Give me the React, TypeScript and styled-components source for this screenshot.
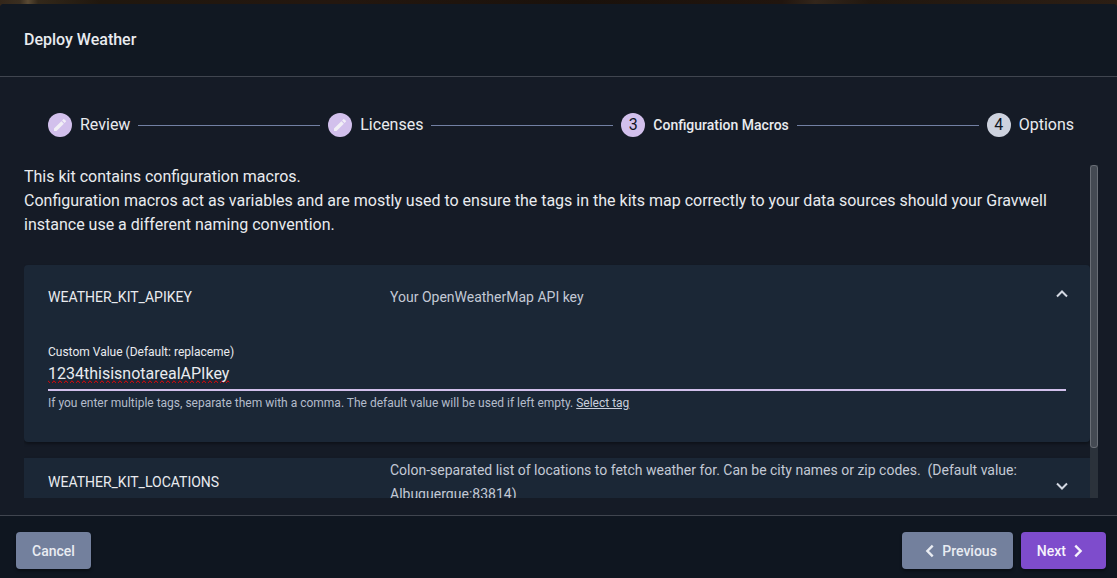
import React, { useState } from "react";
import styled, { createGlobalStyle } from "styled-components";

const GlobalStyle = createGlobalStyle`
  *, *::before, *::after { box-sizing: border-box; }
  body {
    margin: 0;
    background: #1c130d;
    font-family: Roboto, "Liberation Sans", sans-serif;
    font-size: 16px;
    line-height: 24px;
    color: #e9ebef;
  }
  button, input { font: inherit; color: inherit; }
`;

const Backdrop = styled.div`
  height: 100vh;
  padding-top: 4px;
  background: linear-gradient(90deg, #33261a 0, #3a2e20 20px, #5a4a34 28px, #33281a 38px, #20170e 100px, #24170f 30%, #1a110b 52%, #21150e 70%, #33261b 73%, #21170f 78%, #2c1e14 100%);
`;

const Dialog = styled.div`
  display: flex;
  flex-direction: column;
  height: 100%;
  overflow: hidden;
  border-radius: 4px 4px 0 0;
  background: #151b26;
`;

const DialogHeader = styled.header`
  flex: none;
  padding: 24px;
  background: #111822;
  border-bottom: 1px solid #40454f;
`;

const Title = styled.h2`
  margin: 0;
  font-size: 16px;
  font-weight: 500;
  line-height: 24px;
`;

const Body = styled.main`
  flex: 1;
  min-height: 0;
  display: flex;
  flex-direction: column;
  padding: 0 19px 17px 24px;
`;

const Stepper = styled.ol`
  flex: none;
  display: flex;
  align-items: center;
  gap: 8px;
  margin: 0;
  padding: 36px 24px 28px;
  list-style: none;
`;

const Step = styled.li`
  display: flex;
  flex: 1 1 auto;
  align-items: center;
  gap: 8px;
  white-space: nowrap;

  &:not(:last-child)::after {
    content: "";
    flex: 1;
    height: 1px;
    background: #7280a3;
  }
  &:last-child { flex: none; }
`;

const StepBadge = styled.span<{ $pending?: boolean }>`
  display: flex;
  flex: none;
  align-items: center;
  justify-content: center;
  width: 24px;
  height: 24px;
  border-radius: 50%;
  background: ${(p) => (p.$pending ? "#cdd2de" : "#d2c0ec")};
  color: #10151e;
`;

const StepLabel = styled.span<{ $current?: boolean }>`
  font-size: ${(p) => (p.$current ? 14 : 16)}px;
  font-weight: ${(p) => (p.$current ? 500 : 400)};
`;

const ScrollRow = styled.div`
  flex: 1;
  min-height: 0;
  display: flex;
`;

const ScrollArea = styled.div`
  flex: 1;
  min-width: 0;
  overflow-y: auto;
  scrollbar-width: none;
`;

const ScrollTrack = styled.div`
  flex: none;
  width: 8px;
  background: #2b323b;
`;

const ScrollThumb = styled.div`
  height: 85%;
  border: 1px solid #696e76;
  border-radius: 3px;
  background: #444a53;
`;

const Intro = styled.p`
  margin: 0 0 28px;
`;

const Panel = styled.section<{ $open: boolean }>`
  margin-bottom: 16px;
  border-radius: ${(p) => (p.$open ? 4 : 0)}px;
  background: #1b2736;
  box-shadow: 0 2px 3px rgba(0, 0, 0, 0.35);
`;

const PanelHeader = styled.button<{ $open: boolean }>`
  display: grid;
  grid-template-columns: 1fr 2fr 8px;
  column-gap: 16px;
  align-items: center;
  width: 100%;
  min-height: ${(p) => (p.$open ? 64 : 48)}px;
  padding: 0 24px;
  border: 0;
  background: none;
  text-align: left;
  font-size: 14px;
  line-height: 24px;
  cursor: pointer;
`;

const PanelDescription = styled.span`
  color: #c3c9d5;
  white-space: pre-wrap;
`;

const Indicator = styled.svg<{ $open: boolean }>`
  overflow: visible;
  margin: ${(p) => (p.$open ? "0 0 6px" : "8px 0 0")};
  transform: ${(p) => (p.$open ? "rotate(180deg)" : "none")};
`;

const PanelBody = styled.div`
  padding: 15px 24px 31px;
  font-size: 12px;
  line-height: 16px;
`;

const FieldLabel = styled.label`
  display: block;
`;

const TextInput = styled.input`
  display: block;
  width: 100%;
  height: 31px;
  padding: 0 0 3px;
  border: 0;
  border-bottom: 2px solid #d2c0ec;
  outline: 0;
  background: none;
  font-size: 16px;
  line-height: 24px;
  text-decoration-line: spelling-error;
`;

const Hint = styled.p`
  margin: 4px 0 0;
  color: #b4bccb;
`;

const TagLink = styled.a`
  color: #c8cedb;
`;

const Footer = styled.footer`
  flex: none;
  display: flex;
  align-items: center;
  gap: 8px;
  padding: 16px 11px 9px 16px;
  background: #0f1620;
  border-top: 1px solid #40454f;
`;

const Spacer = styled.div`
  flex: 1;
`;

const Button = styled.button<{ $primary?: boolean }>`
  display: inline-flex;
  align-items: center;
  height: 37px;
  padding: 0 16px;
  border: 0;
  border-radius: 4px;
  background: ${(p) => (p.$primary ? "#7e4ccc" : "#73809d")};
  color: ${(p) => (p.$primary ? "#f6f2fc" : "#e9ecf2")};
  font-size: 14px;
  font-weight: 500;
  box-shadow: 0 2px 3px rgba(0, 0, 0, 0.4);
  cursor: pointer;
`;

const PencilIcon = () => (
  <svg width="16" height="16" viewBox="0 0 24 24" fill="#f1eff6" aria-hidden="true">
    <path d="M3 17.25V21h3.75L17.81 9.94l-3.75-3.75L3 17.25zM20.71 7.04a.996.996 0 0 0 0-1.41l-2.34-2.34a.996.996 0 0 0-1.41 0l-1.83 1.83 3.75 3.75 1.83-1.83z" />
  </svg>
);

const ArrowIcon = ({ d }: { d: string }) => (
  <svg width="24" height="24" viewBox="0 0 24 24" fill="none" stroke="currentColor" strokeWidth="2.4" aria-hidden="true">
    <path d={d} />
  </svg>
);

type Macro = { name: string; description: string; initialOpen: boolean; fallback: string; value: string };

const macros: Macro[] = [
  {
    name: "WEATHER_KIT_APIKEY",
    description: "Your OpenWeatherMap API key",
    initialOpen: true,
    fallback: "replaceme",
    value: "1234thisisnotarealAPIkey",
  },
  {
    name: "WEATHER_KIT_LOCATIONS",
    description:
      "Colon-separated list of locations to fetch weather for. Can be city names or zip codes.  (Default value: Albuquerque:83814)",
    initialOpen: false,
    fallback: "Albuquerque:83814",
    value: "",
  },
];

const MacroPanel = ({ macro }: { macro: Macro }) => {
  const [open, setOpen] = useState(macro.initialOpen);
  const [value, setValue] = useState(macro.value);
  return (
    <Panel $open={open}>
      <PanelHeader type="button" $open={open} aria-expanded={open} onClick={() => setOpen(!open)}>
        <span>{macro.name}</span>
        <PanelDescription>{macro.description}</PanelDescription>
        <Indicator $open={open} width="8" height="8" viewBox="0 0 8 8" fill="none" stroke="#d3d8e2" strokeWidth="2" aria-hidden="true">
          <path d="M-1 1.5L4 6.5L9 1.5" />
        </Indicator>
      </PanelHeader>
      {open && (
        <PanelBody>
          <FieldLabel htmlFor={macro.name}>Custom Value (Default: {macro.fallback})</FieldLabel>
          <TextInput id={macro.name} type="text" value={value} onChange={(e) => setValue(e.target.value)} />
          <Hint>
            If you enter multiple tags, separate them with a comma. The default value will be used if left empty.{" "}
            <TagLink href="#tags">Select tag</TagLink>
          </Hint>
        </PanelBody>
      )}
    </Panel>
  );
};

export default function App() {
  return (
    <>
      <GlobalStyle />
      <Backdrop>
        <Dialog role="dialog" aria-labelledby="dialog-title">
          <DialogHeader>
            <Title id="dialog-title">Deploy Weather</Title>
          </DialogHeader>
          <Body>
            <Stepper>
              <Step>
                <StepBadge><PencilIcon /></StepBadge>
                <StepLabel>Review</StepLabel>
              </Step>
              <Step>
                <StepBadge><PencilIcon /></StepBadge>
                <StepLabel>Licenses</StepLabel>
              </Step>
              <Step aria-current="step">
                <StepBadge>3</StepBadge>
                <StepLabel $current>Configuration Macros</StepLabel>
              </Step>
              <Step>
                <StepBadge $pending>4</StepBadge>
                <StepLabel>Options</StepLabel>
              </Step>
            </Stepper>
            <ScrollRow>
              <ScrollArea>
                <Intro>
                  This kit contains configuration macros.
                  <br />
                  Configuration macros act as variables and are mostly used to ensure the tags in the kits map correctly
                  to your data sources should your Gravwell instance use a different naming convention.
                </Intro>
                {macros.map((m) => (
                  <MacroPanel key={m.name} macro={m} />
                ))}
              </ScrollArea>
              <ScrollTrack>
                <ScrollThumb />
              </ScrollTrack>
            </ScrollRow>
          </Body>
          <Footer>
            <Button type="button">Cancel</Button>
            <Spacer />
            <Button type="button">
              <ArrowIcon d="M14.7 6.7L9.4 12L14.7 17.3" />
              Previous
            </Button>
            <Button type="button" $primary>
              Next
              <ArrowIcon d="M9.3 6.7L14.6 12L9.3 17.3" />
            </Button>
          </Footer>
        </Dialog>
      </Backdrop>
    </>
  );
}
